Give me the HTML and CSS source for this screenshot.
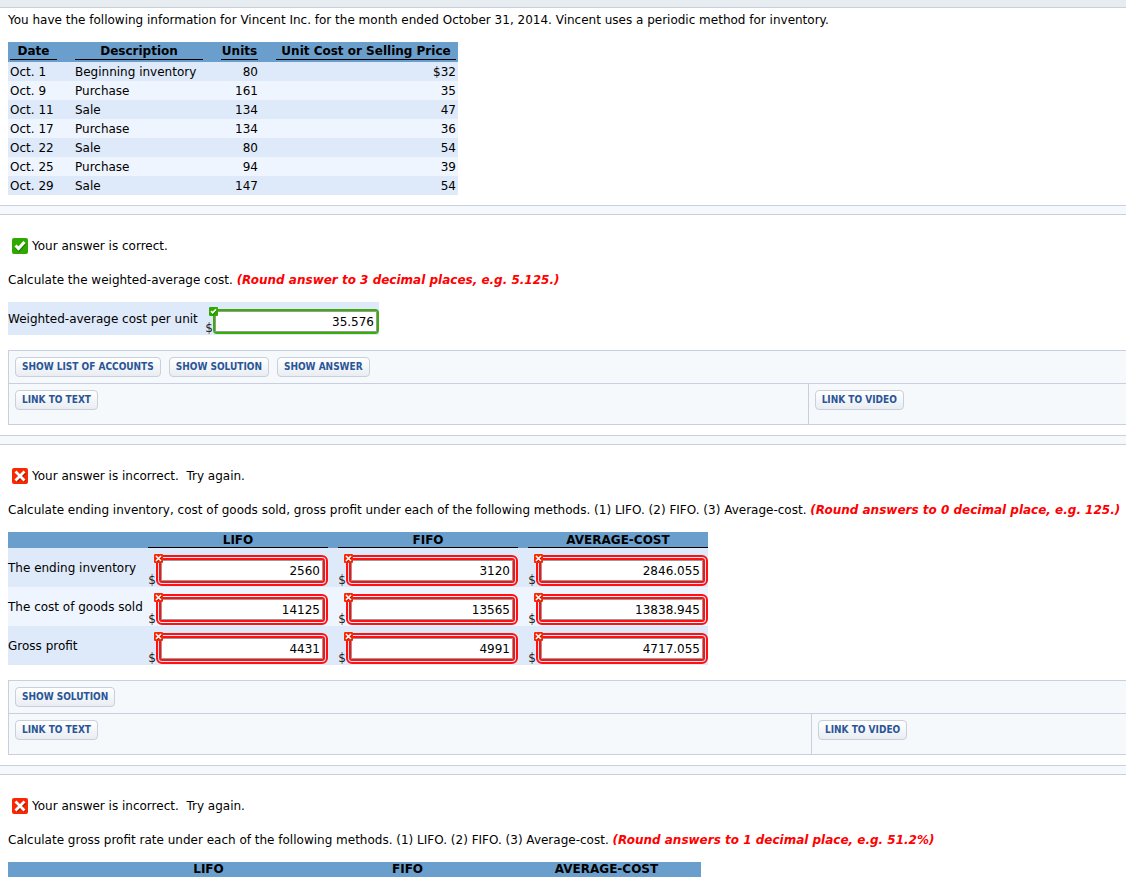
FILE: index.html
```
<!DOCTYPE html>
<html lang="en">
<head>
<meta charset="utf-8">
<title>Vincent Inc. inventory exercise</title>
<link rel="stylesheet" href="styles.css">
</head>
<body>
<svg class="defs" aria-hidden="true">
  <symbol id="ok" viewBox="0 0 16 16">
    <rect width="16" height="16" rx="2" fill="#2fa800"/>
    <path d="M4 9l3 3 6-7" fill="none" stroke="#1f7a00" stroke-width="3"/>
    <path d="M3.500 7.500l3 3 6-6.500" fill="none" stroke="#fff" stroke-width="3"/>
  </symbol>
  <symbol id="bad" viewBox="0 0 16 16">
    <rect width="16" height="16" rx="2" fill="#fb2700"/>
    <path d="M4.500 4.500l8.500 8.500M13 4.500l-8.500 8.500" stroke="#8c1500" stroke-width="3"/>
    <path d="M3.500 3.500l9 9M12.500 3.500l-9 9" stroke="#fff" stroke-width="2.800"/>
  </symbol>
</svg>

<header class="strip"></header>

<main>
  <section class="part intro">
    <p>You have the following information for Vincent Inc. for the month ended October 31, 2014. Vincent uses a periodic method for inventory.</p>
    <table class="data">
      <thead>
        <tr><th class="date"><span>Date</span></th><td class="gap"></td><th class="desc"><span>Description</span></th><td class="gap"></td><th class="units"><span>Units</span></th><td class="gap"></td><th class="price"><span>Unit Cost or Selling Price</span></th></tr>
      </thead>
      <tbody>
        <tr><td>Oct. 1</td><td></td><td>Beginning inventory</td><td></td><td class="num">80</td><td></td><td class="num">$32</td></tr>
        <tr><td>Oct. 9</td><td></td><td>Purchase</td><td></td><td class="num">161</td><td></td><td class="num">35</td></tr>
        <tr><td>Oct. 11</td><td></td><td>Sale</td><td></td><td class="num">134</td><td></td><td class="num">47</td></tr>
        <tr><td>Oct. 17</td><td></td><td>Purchase</td><td></td><td class="num">134</td><td></td><td class="num">36</td></tr>
        <tr><td>Oct. 22</td><td></td><td>Sale</td><td></td><td class="num">80</td><td></td><td class="num">54</td></tr>
        <tr><td>Oct. 25</td><td></td><td>Purchase</td><td></td><td class="num">94</td><td></td><td class="num">39</td></tr>
        <tr><td>Oct. 29</td><td></td><td>Sale</td><td></td><td class="num">147</td><td></td><td class="num">54</td></tr>
      </tbody>
    </table>
  </section>

  <div class="divider"></div>

  <section class="part">
    <p class="status"><svg class="icon" aria-hidden="true"><use href="#ok"/></svg>Your answer is correct.</p>
    <p>Calculate the weighted-average cost. <strong>(Round answer to 3 decimal places, e.g. 5.125.)</strong></p>
    <div class="single">
      <label for="wac">Weighted-average cost per unit</label>
      <div class="money"><span class="cur">$</span><span class="field good"><svg class="badge" aria-hidden="true"><use href="#ok"/></svg><input id="wac" type="text" value="35.576"></span></div>
    </div>
    <div class="panel">
      <div class="bar"><button type="button">SHOW LIST OF ACCOUNTS</button><button type="button">SHOW SOLUTION</button><button type="button">SHOW ANSWER</button></div>
      <div class="links"><div><button type="button">LINK TO TEXT</button></div><div><button type="button">LINK TO VIDEO</button></div></div>
    </div>
  </section>

  <div class="divider"></div>

  <section class="part">
    <p class="status"><svg class="icon" aria-hidden="true"><use href="#bad"/></svg>Your answer is incorrect.&nbsp; Try again.</p>
    <p>Calculate ending inventory, cost of goods sold, gross profit under each of the following methods. (1) LIFO. (2) FIFO. (3) Average-cost. <strong>(Round answers to 0 decimal place, e.g. 125.)</strong></p>
    <table class="entry">
      <thead>
        <tr><td class="name"></td><th class="method">LIFO</th><td class="gutter"></td><th class="method">FIFO</th><td class="gutter"></td><th class="method">AVERAGE-COST</th></tr>
      </thead>
      <tbody>
        <tr>
          <th>The ending inventory</th>
          <td><div class="money"><span class="cur">$</span><span class="field wrong"><svg class="badge" aria-hidden="true"><use href="#bad"/></svg><input type="text" aria-label="Ending inventory, LIFO" value="2560"></span></div></td><td></td>
          <td><div class="money"><span class="cur">$</span><span class="field wrong"><svg class="badge" aria-hidden="true"><use href="#bad"/></svg><input type="text" aria-label="Ending inventory, FIFO" value="3120"></span></div></td><td></td>
          <td><div class="money"><span class="cur">$</span><span class="field wrong"><svg class="badge" aria-hidden="true"><use href="#bad"/></svg><input type="text" aria-label="Ending inventory, average-cost" value="2846.055"></span></div></td>
        </tr>
        <tr>
          <th>The cost of goods sold</th>
          <td><div class="money"><span class="cur">$</span><span class="field wrong"><svg class="badge" aria-hidden="true"><use href="#bad"/></svg><input type="text" aria-label="Cost of goods sold, LIFO" value="14125"></span></div></td><td></td>
          <td><div class="money"><span class="cur">$</span><span class="field wrong"><svg class="badge" aria-hidden="true"><use href="#bad"/></svg><input type="text" aria-label="Cost of goods sold, FIFO" value="13565"></span></div></td><td></td>
          <td><div class="money"><span class="cur">$</span><span class="field wrong"><svg class="badge" aria-hidden="true"><use href="#bad"/></svg><input type="text" aria-label="Cost of goods sold, average-cost" value="13838.945"></span></div></td>
        </tr>
        <tr>
          <th>Gross profit</th>
          <td><div class="money"><span class="cur">$</span><span class="field wrong"><svg class="badge" aria-hidden="true"><use href="#bad"/></svg><input type="text" aria-label="Gross profit, LIFO" value="4431"></span></div></td><td></td>
          <td><div class="money"><span class="cur">$</span><span class="field wrong"><svg class="badge" aria-hidden="true"><use href="#bad"/></svg><input type="text" aria-label="Gross profit, FIFO" value="4991"></span></div></td><td></td>
          <td><div class="money"><span class="cur">$</span><span class="field wrong"><svg class="badge" aria-hidden="true"><use href="#bad"/></svg><input type="text" aria-label="Gross profit, average-cost" value="4717.055"></span></div></td>
        </tr>
      </tbody>
    </table>
    <div class="panel">
      <div class="bar"><button type="button">SHOW SOLUTION</button></div>
      <div class="links"><div><button type="button">LINK TO TEXT</button></div><div><button type="button">LINK TO VIDEO</button></div></div>
    </div>
  </section>

  <div class="divider"></div>

  <section class="part last">
    <p class="status"><svg class="icon" aria-hidden="true"><use href="#bad"/></svg>Your answer is incorrect.&nbsp; Try again.</p>
    <p>Calculate gross profit rate under each of the following methods. (1) LIFO. (2) FIFO. (3) Average-cost. <strong>(Round answers to 1 decimal place, e.g. 51.2%)</strong></p>
    <table class="entry rates">
      <thead>
        <tr><td class="name"></td><th class="method">LIFO</th><td class="gutter"></td><th class="method">FIFO</th><td class="gutter"></td><th class="method">AVERAGE-COST</th></tr>
      </thead>
    </table>
  </section>
</main>
</body>
</html>
```
FILE: styles.css
```
* { box-sizing: border-box; }

body {
  margin: 0;
  background: #fff;
  color: #000;
  font: 12px/16px "DejaVu Sans", Verdana, sans-serif;
}

.defs { display: block; width: 0; height: 0; }

.strip {
  height: 8px;
  background: #e7ecf0;
  border-bottom: 1px solid #c8d0dc;
}

p { margin: 0; }
strong { color: #f00; font-style: italic; }

.part { padding: 23px 0 10px 8px; }
.intro { padding-top: 4px; }
.last { padding-bottom: 0; }

.divider {
  height: 10px;
  background: #f5f9fc;
  border: solid #c8d0e0;
  border-width: 1px 0;
}

.status {
  display: flex;
  align-items: center;
  gap: 4px;
  padding-left: 4px;
  margin-bottom: 18px;
}
.icon { width: 16px; height: 16px; }

table { border-collapse: collapse; table-layout: fixed; }
th, td { padding: 0; }

/* Transactions */
.data { width: 450px; margin-top: 14px; }
.data thead { background: #6a9ecc; }
.data th { height: 20px; padding: 2px 2px 0; vertical-align: top; }
.data th span {
  display: block;
  line-height: 15px;
  border-bottom: 1px solid #000;
}
.data tbody td { height: 19px; padding: 0 2px; }
.date { width: 51px; }
.gap { width: 14px; }
.desc { width: 132px; }
.units { width: 41px; }
.num { text-align: right; }
tbody tr:nth-child(odd) { background: #dee9f9; }
tbody tr:nth-child(even) { background: #eef5ff; }

/* Answer fields */
.single {
  display: flex;
  justify-content: space-between;
  width: 371px;
  margin-top: 14px;
  padding: 7px 0 1px;
  background: #dee9f9;
}
.single label { padding-top: 2px; }
.money {
  display: flex;
  align-items: flex-end;
  justify-content: flex-end;
}
.cur { line-height: 12px; color: #222; }
.field { position: relative; }
.badge {
  position: absolute;
  top: -4px;
  left: -6px;
  width: 9px;
  height: 9px;
}
input {
  display: block;
  width: 100%;
  height: 21px;
  margin: 0;
  padding: 0 2px;
  border: 1px solid #999;
  background: #fff;
  color: #000;
  font: inherit;
  text-align: right;
}
.good { width: 166px; border: 2px solid #3aad08; border-radius: 4px; }
.wrong { width: 172px; border: 5px double #f11; border-radius: 6px; }
.wrong .badge { top: -6px; left: -7px; }

.entry { width: 700px; margin-top: 14px; }
.entry thead { background: #6a9ecc; }
.entry thead th { height: 16px; box-shadow: inset 0 -1px #000; }
.entry tbody th { font-weight: normal; text-align: left; }
.entry tbody td, .entry tbody th { height: 39px; }
.entry tbody td { vertical-align: bottom; padding-bottom: 1px; }
.name { width: 140px; }
.gutter { width: 10px; }
.rates { width: 693px; }
.rates .name { width: 106px; }
.rates thead th { height: 15px; line-height: 15px; box-shadow: none; }

/* Action panels */
.panel {
  margin-top: 15px;
  background: #f5f9fc;
  border: solid #c8d0e0;
  border-width: 1px 0 1px 1px;
}
.bar {
  display: flex;
  gap: 8px;
  padding: 6px;
  border-bottom: 1px solid #c8d0e0;
}
.links { display: flex; }
.links div { flex: 0 0 auto; padding: 6px 6px 14px; }
.links div:first-child { width: 71.5%; }
.entry + .panel .links div:first-child { width: 71.8%; }
.links div + div { flex: 1; border-left: 1px solid #c8d0e0; }
button {
  display: block;
  height: 20px;
  margin: 0;
  padding: 0 6px;
  border: 1px solid #c8d0dc;
  border-radius: 4px;
  background: linear-gradient(#fff, #e9edf2);
  color: #2a5597;
  font: bold 10px/16px "DejaVu Sans Condensed", "DejaVu Sans", Verdana, sans-serif;
  white-space: nowrap;
}
```
